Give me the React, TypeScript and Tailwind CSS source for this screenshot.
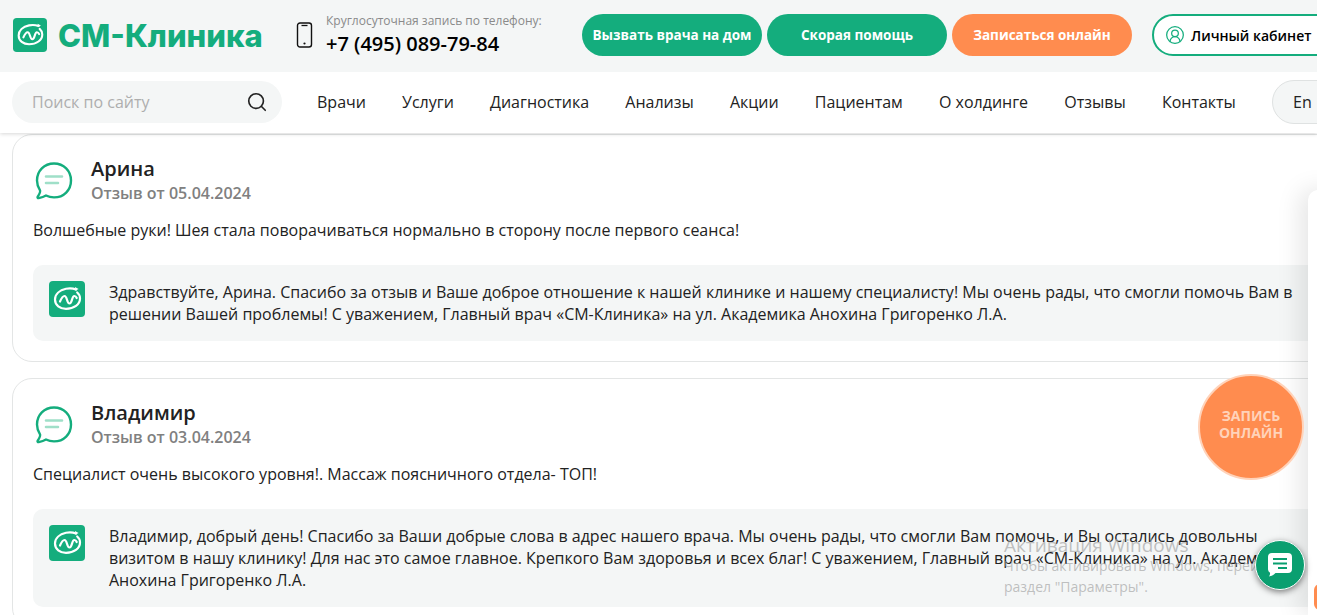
import React from 'react';
import { Search, CircleUserRound } from 'lucide-react';

const navItems = ['Врачи', 'Услуги', 'Диагностика', 'Анализы', 'Акции', 'Пациентам', 'О холдинге', 'Отзывы', 'Контакты'];

const reviews = [
  {
    name: 'Арина',
    date: 'Отзыв от 05.04.2024',
    text: 'Волшебные руки! Шея стала поворачиваться нормально в сторону после первого сеанса!',
    reply:
      'Здравствуйте, Арина. Спасибо за отзыв и Ваше доброе отношение к нашей клинике и нашему специалисту! Мы очень рады, что смогли помочь Вам в решении Вашей проблемы! С уважением, Главный врач «СМ-Клиника» на ул. Академика Анохина Григоренко Л.А.',
  },
  {
    name: 'Владимир',
    date: 'Отзыв от 03.04.2024',
    text: 'Специалист очень высокого уровня!. Массаж поясничного отдела- ТОП!',
    reply:
      'Владимир, добрый день! Спасибо за Ваши добрые слова в адрес нашего врача. Мы очень рады, что смогли Вам помочь, и Вы остались довольны визитом в нашу клинику! Для нас это самое главное. Крепкого Вам здоровья и всех благ! С уважением, Главный врач «СМ-Клиника» на ул. Академика Анохина Григоренко Л.А.',
  },
];

const LogoMark = ({ className }: { className: string }) => (
  <svg viewBox="0 0 36 36" className={className}>
    <rect width="36" height="36" rx="4" fill="#14ad7d" />
    <path
      d="M27 8.500C24 7.300 20.500 7 17 7.800 10.500 9.200 6 13.300 6 18.500 6 24.300 11 27.800 17 27.800 25 27.800 31 23.500 31 17.500c0-2.500-1-4.500-2.800-6"
      fill="none"
      stroke="#fff"
      strokeWidth="2.200"
      strokeLinecap="round"
    />
    <path d="M26 6l3.600 2-3.200 1.800z" fill="#fff" />
    <path
      d="M11 20.500c1.300-3 2.600-5.500 4.500-5.500 2.800 0 2.200 7.500 5 7.500 2.700 0 2.300-7.500 4.800-7.500 1.100 0 1.900.8 2.400 2"
      fill="none"
      stroke="#fff"
      strokeWidth="2.200"
      strokeLinecap="round"
    />
  </svg>
);

const PhoneIcon = () => (
  <svg viewBox="0 0 17 26" className="h-[26px] w-[17px] shrink-0" fill="none">
    <rect x="1.500" y="1" width="14" height="24" rx="2.500" stroke="#111" strokeWidth="1.400" />
    <path d="M5.500 3.500h6" stroke="#111" strokeWidth="1.300" />
    <circle cx="8.500" cy="21.500" r="1.100" fill="#111" />
  </svg>
);

const ChatBubble = () => (
  <svg viewBox="0 0 38 38" className="w-[38px] h-[38px] shrink-0" fill="none">
    <path
      d="M19 1.500C9.200 1.500 2 8.900 2 18.500c0 3.700 1.100 7 3 9.800.4.900-.9 4.300-2.300 6.400-.5.800.1 1.600 1 1.400 2.800-.6 5.600-1.600 7.300-2.600 2.500 1.300 5 1.900 8 1.900 9.800 0 17-7.300 17-16.900S28.800 1.500 19 1.500z"
      stroke="#14ad7d"
      strokeWidth="2.400"
      strokeLinejoin="round"
    />
    <path d="M11 14.500h16M11 21h12" stroke="#9fdfc8" strokeWidth="2.600" strokeLinecap="round" />
  </svg>
);

const ReviewCard = ({ review }: { review: (typeof reviews)[number] }) => (
  <article className="w-[1340px] rounded-[20px] border border-[#e3e5e5] bg-white pt-[20px] pr-[20px] pb-[20px] pl-[20px]">
    <div className="flex items-start gap-[17px] pl-[2px]">
      <div className="pt-[7px]">
        <ChatBubble />
      </div>
      <div className="pl-[1px]">
        <div className="text-[20px] leading-[27px] font-semibold text-[#222]">{review.name}</div>
        <div className="text-[16px] leading-[22px] font-semibold text-[#808080]">{review.date}</div>
      </div>
    </div>
    <p className="mt-[15px] text-[16px] leading-[22px] text-[#222]">{review.text}</p>
    <div className="mt-[24px] flex w-[1290px] items-start gap-[24px] rounded-[10px] bg-[#f4f6f6] pt-[16px] pr-[14px] pb-[16px] pl-[16px]">
      <LogoMark className="w-[36px] h-[36px] shrink-0" />
      <p className="w-[1186px] text-[16px] leading-[22px] text-[#222]">{review.reply}</p>
    </div>
  </article>
);

export default function App() {
  return (
    <div className="relative h-[615px] w-[1317px] overflow-hidden bg-white font-['Open_Sans','Noto_Sans',sans-serif]">
      <header className="relative z-10 shadow-[0_1px_4px_rgba(0,0,0,0.16)]">
        {/* Top row */}
        <div className="flex h-[72px] items-center bg-[#f4f6f6] pb-[2px] pl-[13px]">
          <LogoMark className="w-[34px] h-[36px] shrink-0" />
          <span className="ml-[11px] w-[204px] shrink-0 font-['Inter',sans-serif] text-[31px] leading-none font-extrabold whitespace-nowrap text-[#14ad7d]">
            СМ-Клиника
          </span>
          <div className="ml-[34px]">
            <PhoneIcon />
          </div>
          <div className="ml-[13px] w-[256px] shrink-0">
            <div className="text-[12px] leading-[16px] text-[#8a8a8a]">Круглосуточная запись по телефону:</div>
            <div className="mt-[2px] text-[20px] leading-[26px] font-semibold text-black">+7 (495) 089-79-84</div>
          </div>
          <div className="flex shrink-0 gap-[5px]">
            <button className="h-[42px] w-[180px] rounded-[21px] bg-[#14ad7d] text-[13.5px] font-bold text-white">Вызвать врача на дом</button>
            <button className="h-[42px] w-[180px] rounded-[21px] bg-[#14ad7d] text-[13.5px] font-bold text-white">Скорая помощь</button>
            <button className="h-[42px] w-[180px] rounded-[21px] bg-[#ff8c4f] text-[13.5px] font-bold text-white">Записаться онлайн</button>
          </div>
          <button className="ml-[20px] flex h-[42px] w-[190px] shrink-0 items-center gap-[6px] rounded-[21px] border-2 border-[#14ad7d] bg-white pl-[11px]">
            <CircleUserRound className="h-[20px] w-[20px] text-[#14ad7d]" strokeWidth={1.5} />
            <span className="text-[14px] font-semibold text-black">Личный кабинет</span>
          </button>
        </div>
        {/* Nav row */}
        <div className="flex h-[61px] items-center bg-white pb-[2px] pl-[12px]">
          <div className="flex h-[42px] w-[270px] shrink-0 items-center justify-between rounded-[21px] bg-[#f4f6f6] pr-[14px] pl-[20px]">
            <span className="text-[16px] text-[#aeaeae]">Поиск по сайту</span>
            <Search className="h-[22px] w-[22px] text-[#222]" strokeWidth={1.8} />
          </div>
          <nav className="ml-[35px] flex w-[955px] shrink-0 gap-[36.15px]">
            {navItems.map((item) => (
              <a key={item} className="text-[16px] whitespace-nowrap text-[#222]">
                {item}
              </a>
            ))}
          </nav>
          <div className="flex h-[44px] w-[60px] shrink-0 items-center rounded-l-[22px] border border-[#dfe2e2] bg-[#f4f6f6] pl-[20px] text-[16px] text-[#222]">
            En
          </div>
        </div>
      </header>

      <main className="flex flex-col gap-[16px] pt-[1px] pl-[12px]">
        {reviews.map((review) => (
          <ReviewCard key={review.name} review={review} />
        ))}
      </main>

      {/* Side panel sticking in from the right */}
      <div className="absolute top-[190px] left-[1308px] z-20 h-[425px] w-[40px] rounded-tl-[10px] bg-white shadow-[-8px_0_24px_rgba(0,0,0,0.10)]" />
      <div className="absolute top-[584px] left-[1314px] z-20 h-[26px] w-[10px] rounded-l-[6px] bg-[#ff8c4f]" />

      {/* Floating round button */}
      <div className="absolute top-[374px] left-[1198px] z-30 flex h-[106px] w-[106px] items-center justify-center rounded-full border-2 border-[#ffd3ba] bg-[#ff8c4f] pb-[6px] text-center text-[14px] leading-[17px] font-bold text-[#ffd3ba]">
        ЗАПИСЬ
        <br />
        ОНЛАЙН
      </div>

      {/* Windows activation watermark */}
      <div className="pointer-events-none absolute top-[532px] left-[1004px] z-30 w-[320px] whitespace-nowrap text-[#a6a6a6]/70">
        <div className="text-[19px] leading-[26px]">Активация Windows</div>
        <div className="mt-[-3px] text-[14px] leading-[21px]">Чтобы активировать Windows, перейдите в</div>
        <div className="text-[14px] leading-[21px]">раздел "Параметры".</div>
      </div>

      {/* Chat button */}
      <div className="absolute top-[540px] left-[1255px] z-40 flex h-[50px] w-[50px] items-center justify-center rounded-full border border-white bg-[#0a9f70] shadow-[0_2px_6px_rgba(0,0,0,0.5)]">
        <svg viewBox="0 0 28 28" className="h-[28px] w-[28px]">
          <path d="M6 2h16a4 4 0 0 1 4 4v12a4 4 0 0 1-4 4H9.500c-1.500 1.600-3.500 3-6.500 3.500 1-1.300 1.200-2.500 1-3.800A4 4 0 0 1 2 18V6a4 4 0 0 1 4-4z" fill="#fff" />
          <path d="M7 8h14M7 12.500h14M12 17h9" stroke="#0a9f70" strokeWidth="2" />
        </svg>
      </div>
    </div>
  );
}
